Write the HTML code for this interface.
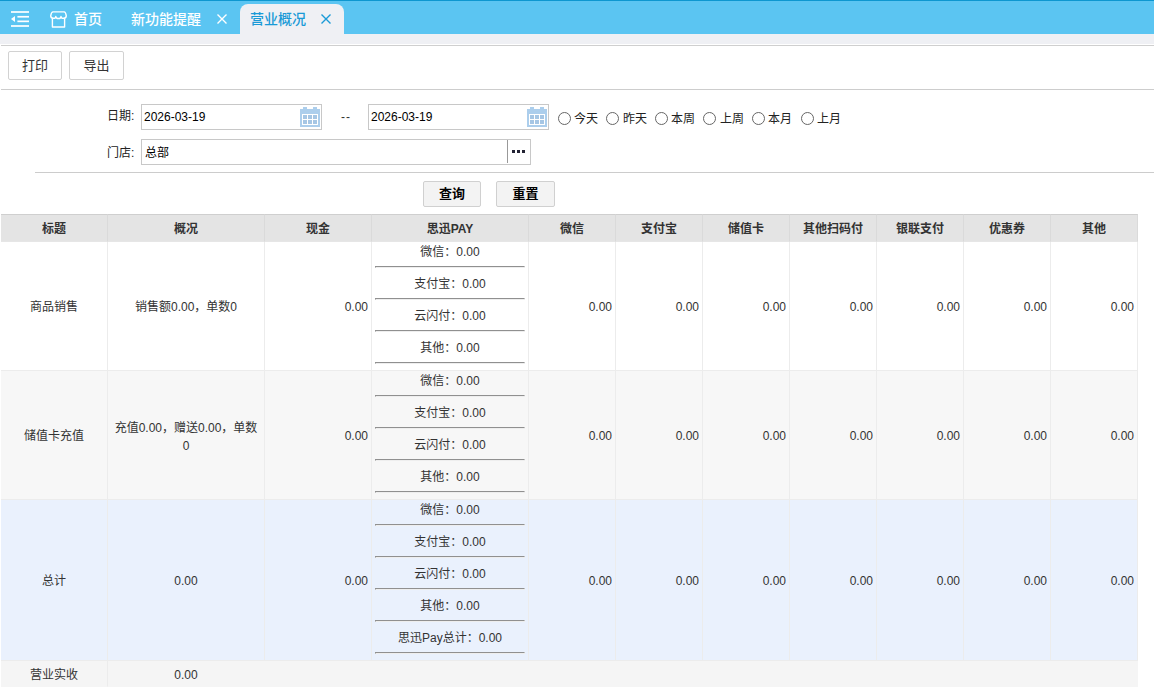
<!DOCTYPE html>
<html lang="zh-CN">
<head>
<meta charset="utf-8">
<title>营业概况</title>
<style>
*{box-sizing:border-box;margin:0;padding:0}
html,body{width:1154px;height:695px;overflow:hidden;background:#fff}
body{font-family:"Liberation Sans","Noto Sans CJK SC",sans-serif;font-size:12px;color:#333;position:relative}
.abs{position:absolute}
/* top bar */
#topline{left:0;top:0;width:1154px;height:1px;background:#0d97d0}
#topbar{left:0;top:0;width:1154px;height:34px;background:#5bc5f2}
#strip{left:0;top:34px;width:1154px;height:10px;background:#eff0f4}
#stripline{left:1px;top:45px;width:1153px;height:1px;background:#cfcfcf}
.tab{position:absolute;top:4px;height:30px;line-height:30px;font-size:14px;font-weight:500;color:#fff;white-space:nowrap}
#tab3{left:240px;width:104px;background:#eff0f4;border-radius:8px 8px 0 0;color:#1a9ad7}
.tx{position:absolute;top:0}
/* toolbar */
.btn{position:absolute;top:51px;height:29px;border:1px solid #d2d2d2;border-radius:2px;background:#fff;font-size:13px;line-height:28px;text-align:center;color:#333}
#tline{left:1px;top:89px;width:1153px;height:1px;background:#cdcdcd}
/* form */
.lbl{position:absolute;font-size:12px;color:#222;white-space:nowrap}
.inp{position:absolute;border:1px solid #c8c8c8;background:#fff;height:26px;font-size:12px;line-height:24px;padding-left:3px;color:#000}
.radio{position:absolute;top:112px;width:13px;height:13px;border:1px solid #666;border-radius:50%;background:#fff}
.rl{position:absolute;top:111px;font-size:12px;line-height:17px;color:#222;white-space:nowrap}
#fline{left:35px;top:172px;width:1119px;height:1px;background:#cccccc}
.qbtn{position:absolute;top:181px;height:26px;width:58px;border:1px solid #d0d0d0;background:#f3f3f3;border-radius:2px;font-size:13px;font-weight:bold;line-height:24px;text-align:center;color:#000}
/* table */
#tbl{left:1px;top:214px;width:1137px;border-collapse:separate;border-spacing:0;table-layout:fixed;position:absolute}
#tbl th{line-height:16px;height:28px;background:#e4e4e4;font-weight:bold;font-size:12px;color:#333;border-right:1px solid #dadada;border-top:1px solid #cfcfcf;border-bottom:1px solid #e6e6e6;text-align:center;vertical-align:middle;padding:2px 0 0 0}
#tbl td{line-height:16px;border-right:1px solid #ececec;border-bottom:1px solid #ececec;font-size:12px;color:#333;vertical-align:middle;padding:0}
#tbl td.c{text-align:center;padding-top:2px}
#tbl td.r{text-align:right;padding-right:3px;padding-top:2px}
tr.r1 td{background:#fff}
tr.r2 td{background:#f7f7f7}
tr.r3 td{background:#eaf1fd}
tr.r4 td{background:#f5f5f5;border-bottom-color:#f5f5f5 !important}
.pay{margin:0 3px 0 3px}
.pay p{height:19px;line-height:21px;text-align:center}
.pay i{display:block;height:2px;margin:5px 0 6px 0;border-top:1px solid #909090;border-left:1px solid #909090;border-bottom:1px solid #eee;border-right:1px solid #eee}
td.pc{vertical-align:top !important}
</style>
</head>
<body>
<div class="abs" id="topbar"></div>
<div class="abs" id="topline"></div>
<div class="abs" id="strip"></div>
<div class="abs" id="stripline"></div>

<!-- menu icon -->
<svg class="abs" style="left:5px;top:5px" width="30" height="30" viewBox="0 0 30 30">
  <rect x="6" y="6" width="18" height="2" fill="#fff" fill-opacity="0.85"/>
  <rect x="12.4" y="10.9" width="11.6" height="1.7" fill="#fff"/>
  <rect x="12.4" y="15.5" width="11.6" height="1.7" fill="#fff"/>
  <rect x="6" y="20" width="18" height="2" fill="#fff" fill-opacity="0.85"/>
  <path d="M6 14 L10 11 L10 17 Z" fill="#fff"/>
</svg>
<!-- shop icon -->
<svg class="abs" style="left:45px;top:5px" width="30" height="30" viewBox="0 0 30 30">
  <path d="M8 6.9 H19.2 Q20.6 7 21.3 10.8 Q21.2 13.3 18.6 13.3 Q16 13.3 16 11.4 Q16 13.5 13.5 13.5 Q10.8 13.5 10.8 11.4 Q10.8 13.3 8.2 13.3 Q5.8 13.3 5.7 10.8 Q6.4 7 8 6.9 Z" fill="none" stroke="#fff" stroke-width="1.4" stroke-linejoin="round"/>
  <path d="M7.4 13.3 V22 H19.6 V13.3" fill="none" stroke="#fff" stroke-width="1.4" stroke-linejoin="round"/>
</svg>
<div class="tab" style="left:74px">首页</div>
<div class="tab" style="left:131px">新功能提醒</div>
<svg class="abs" style="left:216px;top:13px" width="12" height="12" viewBox="0 0 12 12"><path d="M1.5 1.5 L10.5 10.5 M10.5 1.5 L1.5 10.5" stroke="#fff" stroke-width="1.4" fill="none"/></svg>
<div class="tab" id="tab3"><span class="tx" style="left:10px">营业概况</span></div>
<svg class="abs" style="left:320px;top:13px" width="12" height="12" viewBox="0 0 12 12"><path d="M1.5 1.5 L10.5 10.5 M10.5 1.5 L1.5 10.5" stroke="#1a9ad7" stroke-width="1.4" fill="none"/></svg>

<!-- toolbar -->
<div class="btn" style="left:8px;width:54px">打印</div>
<div class="btn" style="left:69px;width:55px">导出</div>
<div class="abs" id="tline"></div>

<!-- form -->
<div class="lbl" style="left:107px;top:106px">日期:</div>
<div class="inp" style="left:141px;top:104px;width:181px;padding-left:2px">2026-03-19</div>
<svg class="abs" style="left:300px;top:107px" width="20" height="20" viewBox="0 0 20 20"><rect x="3" y="0" width="4" height="3" fill="#acceec"/><rect x="13" y="0" width="4" height="3" fill="#acceec"/><rect x="0" y="2" width="20" height="18" fill="#acceec"/><rect x="2" y="7" width="16" height="11" fill="#fff"/><g fill="#a6c6e4"><rect x="3" y="8" width="4" height="4"/><rect x="8" y="8" width="4" height="4"/><rect x="13" y="8" width="4" height="4"/><rect x="3" y="13" width="4" height="4"/><rect x="8" y="13" width="4" height="4"/><rect x="13" y="13" width="4" height="4"/></g></svg>
<div class="lbl" style="left:341px;top:110px;color:#333;letter-spacing:1px">--</div>
<div class="inp" style="left:368px;top:104px;width:181px;padding-left:2px">2026-03-19</div>
<svg class="abs" style="left:527px;top:107px" width="20" height="20" viewBox="0 0 20 20"><rect x="3" y="0" width="4" height="3" fill="#acceec"/><rect x="13" y="0" width="4" height="3" fill="#acceec"/><rect x="0" y="2" width="20" height="18" fill="#acceec"/><rect x="2" y="7" width="16" height="11" fill="#fff"/><g fill="#a6c6e4"><rect x="3" y="8" width="4" height="4"/><rect x="8" y="8" width="4" height="4"/><rect x="13" y="8" width="4" height="4"/><rect x="3" y="13" width="4" height="4"/><rect x="8" y="13" width="4" height="4"/><rect x="13" y="13" width="4" height="4"/></g></svg>
<div class="lbl" style="left:107px;top:143px">门店:</div>
<div class="inp" style="left:141px;top:139px;width:390px;line-height:26px">总部</div>
<div class="abs" style="left:507px;top:140px;width:1px;height:23px;background:#999"></div>
<div class="abs" style="left:512px;top:150px;width:3px;height:3px;background:#223;box-shadow:5px 0 0 #223,10px 0 0 #223"></div>

<div class="radio" style="left:558px"></div><div class="rl" style="left:574px">今天</div>
<div class="radio" style="left:606px"></div><div class="rl" style="left:623px">昨天</div>
<div class="radio" style="left:655px"></div><div class="rl" style="left:671px">本周</div>
<div class="radio" style="left:703px"></div><div class="rl" style="left:720px">上周</div>
<div class="radio" style="left:752px"></div><div class="rl" style="left:768px">本月</div>
<div class="radio" style="left:801px"></div><div class="rl" style="left:817px">上月</div>

<div class="abs" id="fline"></div>
<div class="qbtn" style="left:423px">查询</div>
<div class="qbtn" style="left:496px;width:59px">重置</div>

<!-- table -->
<table id="tbl">
<colgroup>
<col style="width:107px"><col style="width:157px"><col style="width:107px"><col style="width:157px">
<col style="width:87px"><col style="width:87px"><col style="width:87px"><col style="width:87px"><col style="width:87px"><col style="width:87px"><col style="width:87px">
</colgroup>
<tr><th>标题</th><th>概况</th><th>现金</th><th>思迅PAY</th><th>微信</th><th>支付宝</th><th>储值卡</th><th>其他扫码付</th><th>银联支付</th><th>优惠券</th><th>其他</th></tr>
<tr class="r1" style="height:129px"><td class="c">商品销售</td><td class="c">销售额0.00，单数0</td><td class="r">0.00</td>
<td class="pc"><div class="pay"><p>微信：0.00</p><i></i><p>支付宝：0.00</p><i></i><p>云闪付：0.00</p><i></i><p>其他：0.00</p><i></i></div></td>
<td class="r">0.00</td><td class="r">0.00</td><td class="r">0.00</td><td class="r">0.00</td><td class="r">0.00</td><td class="r">0.00</td><td class="r">0.00</td></tr>
<tr class="r2" style="height:129px"><td class="c">储值卡充值</td><td class="c" style="padding:4px 5px 0 5px;line-height:18px">充值0.00，赠送0.00，单数0</td><td class="r">0.00</td>
<td class="pc"><div class="pay"><p>微信：0.00</p><i></i><p>支付宝：0.00</p><i></i><p>云闪付：0.00</p><i></i><p>其他：0.00</p><i></i></div></td>
<td class="r">0.00</td><td class="r">0.00</td><td class="r">0.00</td><td class="r">0.00</td><td class="r">0.00</td><td class="r">0.00</td><td class="r">0.00</td></tr>
<tr class="r3" style="height:161px"><td class="c">总计</td><td class="c">0.00</td><td class="r">0.00</td>
<td class="pc"><div class="pay"><p>微信：0.00</p><i></i><p>支付宝：0.00</p><i></i><p>云闪付：0.00</p><i></i><p>其他：0.00</p><i></i><p>思迅Pay总计：0.00</p><i></i></div></td>
<td class="r">0.00</td><td class="r">0.00</td><td class="r">0.00</td><td class="r">0.00</td><td class="r">0.00</td><td class="r">0.00</td><td class="r">0.00</td></tr>
<tr class="r4" style="height:26px"><td class="c">营业实收</td><td class="c" style="border-right-color:#f5f5f5">0.00</td><td colspan="9" style="border-right:none"></td></tr>
</table>
</body>
</html>
